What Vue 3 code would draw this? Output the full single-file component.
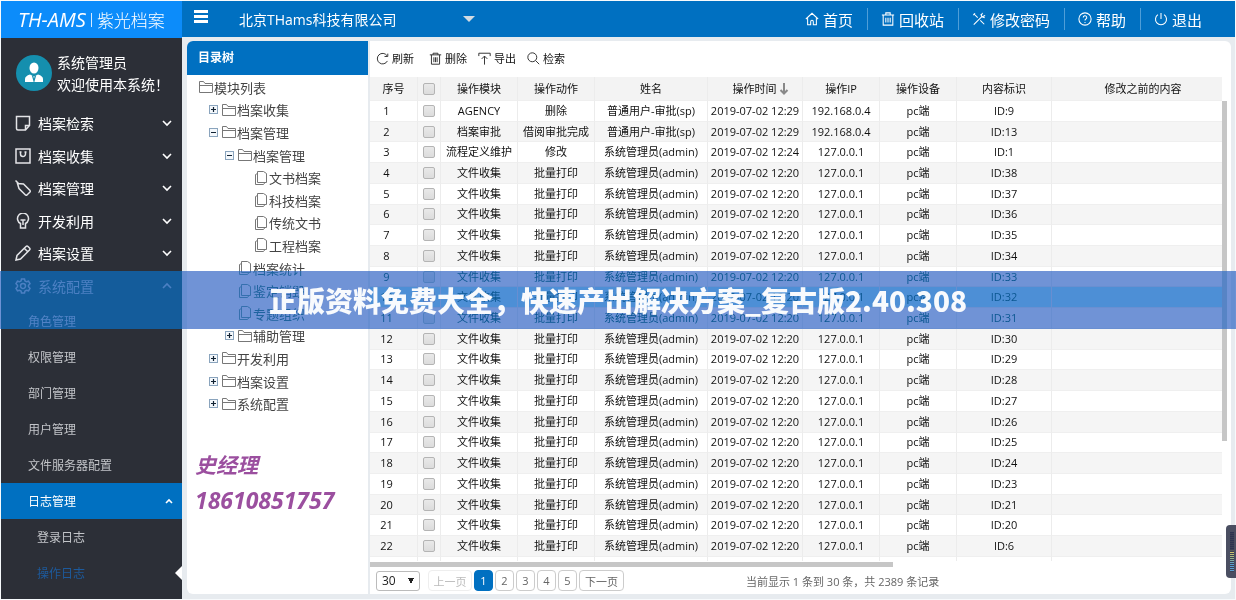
<script setup>
const nav = [
  { icon: 'home', label: '首页' },
  { icon: 'bin', label: '回收站' },
  { icon: 'tools', label: '修改密码' },
  { icon: 'help', label: '帮助' },
  { icon: 'power', label: '退出' }
]
const menu = [
  { icon: 'note', label: '档案检索' },
  { icon: 'bag', label: '档案收集' },
  { icon: 'tag', label: '档案管理' },
  { icon: 'bulb', label: '开发利用' },
  { icon: 'pencil', label: '档案设置' },
  { icon: 'gear', label: '系统配置', open: true }
]
const submenu = [
  { label: '角色管理', kind: 'dim' },
  { label: '权限管理' },
  { label: '部门管理' },
  { label: '用户管理' },
  { label: '文件服务器配置' },
  { label: '日志管理', kind: 'active' },
  { label: '登录日志', kind: 'deep' },
  { label: '操作日志', kind: 'deep current' }
]
const tree = [
  { level: 0, label: '模块列表' },
  { level: 1, label: '档案收集', box: '+' },
  { level: 1, label: '档案管理', box: '-' },
  { level: 2, label: '档案管理', box: '-' },
  { level: 3, label: '文书档案' },
  { level: 3, label: '科技档案' },
  { level: 3, label: '传统文书' },
  { level: 3, label: '工程档案' },
  { level: 2, label: '档案统计' },
  { level: 2, label: '鉴定销毁' },
  { level: 2, label: '专题组织' },
  { level: 2, label: '辅助管理', box: '+' },
  { level: 1, label: '开发利用', box: '+' },
  { level: 1, label: '档案设置', box: '+' },
  { level: 1, label: '系统配置', box: '+' }
]
const tools = [
  { icon: 'refresh', label: '刷新' },
  { icon: 'trash', label: '删除' },
  { icon: 'export', label: '导出' },
  { icon: 'search', label: '检索' }
]
const ids = [9, 13, 1, 38, 37, 36, 35, 34, 33, 32, 31, 30, 29, 28, 27, 26, 25, 24, 23, 21, 20, 6]
const first = [
  ['AGENCY', '删除', '普通用户-审批(sp)', '12:29', '192.168.0.4'],
  ['档案审批', '借阅审批完成', '普通用户-审批(sp)', '12:29', '192.168.0.4'],
  ['流程定义维护', '修改', '系统管理员(admin)', '12:24', '127.0.0.1']
]
const rows = ids.map((id, i) => {
  const r = first[i] || ['文件收集', '批量打印', '系统管理员(admin)', '12:20', '127.0.0.1']
  return { no: i + 1, module: r[0], action: r[1], name: r[2], time: '2019-07-02 ' + r[3], ip: r[4], id: 'ID:' + id }
})
const pages = [1, 2, 3, 4, 5]
const paths = {
  home: 'M1 8 8 1.5 15 8M3 7v7.5h3.5V11a1.5 1.5 0 0 1 3 0v3.5H13V7',
  bin: 'M1 3.5h14M5.5 3V1h5v2M2.5 3.5V15h11V3.5M5.5 6.5v5.500M8 6.5v5.500M10.500 6.500v5.500',
  tools: 'M2 14.500 11.500 5M10 2.500l1.500 3 3 1M12 1l-1.500 3M15 4l-3 1.500M2 2l4.500 4.500M9.500 9.500 14 14M1.500 3.500 3.500 1.500',
  help: 'M8 1a7 7 0 1 0 0 14A7 7 0 1 0 8 1M6 6.300a2 2 0 1 1 3 1.700Q8 8.500 8 9.800M8 11.300v1.200',
  power: 'M4.500 3a6.300 6.300 0 1 0 7 0M8 1v7',
  note: 'M1.500 1.500h13V10.500L10.500 15H3Q1.500 15 1.500 13.500ZM10.500 15V10.500h4',
  bag: 'M1 1h14v14H1ZM5.500 4v2a2.500 2.500 0 0 0 5 0V4M4.500 4h2M9.500 4h2',
  tag: 'M.5.5 4 4M2.500 3.500 8.500 4 15 10.500Q15.500 11.500 15 12L12 15Q11 15.500 10.500 15L4 8.500Z',
  bulb: 'M5.500 12.500V10.500A5.500 5.500 0 1 1 10.500 10.500V12.500M5.500 11.500v3.500h5v-3.500M5.500 7h5M8 7V12',
  pencil: 'M1 15 2 10.500 11 1.500Q12 .5 13 1.500L14.500 3Q15.500 4 14.500 5L5.500 14ZM9.500 3.500l3 3',
  gear: 'M6.500 1h3l.5 2 1.500.8 2-.6 1.500 2.500-1.500 1.500v1.600l1.500 1.500-1.500 2.500-2-.6-1.500.8-.5 2h-3l-.5-2-1.500-.8-2 .6L1 10.300l1.500-1.500V7.200L1 5.700l1.500-2.500 2 .6L6 3ZM8 5.500a2.500 2.500 0 1 0 0 5 2.500 2.500 0 1 0 0-5',
  refresh: 'M13.500 4.500A6.500 6.500 0 1 0 14 11M14.500 2v3.500h-4',
  trash: 'M1 3.500h14M5 3.500V1.500h6v2M3 3.500V15h10V3.500M6 6.500v6M8 6.500v6M10 6.500v6',
  export: 'M1 5V1.500h14V5M8 15.500V5M4.500 8.500 8 5l3.500 3.500',
  search: 'M6.500 1a5.500 5.500 0 1 0 0 11 5.500 5.500 0 1 0 0-11M10.500 10.500 15 15'
}
</script>

<template>
  <div class="page">
    <aside class="side">
      <div class="logo"><em>TH-AMS</em><i></i><span>紫光档案</span></div>
      <div class="profile">
        <svg class="avatar" viewBox="0 0 36 36">
          <circle cx="18" cy="18" r="18" fill="#158fae" />
          <ellipse cx="18" cy="13" rx="4.500" ry="5.500" fill="#fff" />
          <path d="M9 27v-3q0-3 5-4.500l4 2 4-2q5 1.500 5 4.500v3z" fill="#fff" />
          <path d="M16.500 20.500 18 26l1.500-5.500" fill="none" stroke="#158fae" />
        </svg>
        <p>系统管理员<br />欢迎使用本系统！</p>
      </div>
      <nav class="menu">
        <button v-for="m in menu" :key="m.label" type="button" :class="{ open: m.open }">
          <svg class="ico" viewBox="0 0 16 16"><path :d="paths[m.icon]" /></svg>
          <span>{{ m.label }}</span>
          <svg class="chev" viewBox="0 0 10 10"><path :d="m.open ? 'M1 7l4-4 4 4' : 'M1 3l4 4 4-4'" /></svg>
        </button>
      </nav>
      <nav class="sub">
        <a v-for="s in submenu" :key="s.label" href="#" :class="s.kind">
          <span>{{ s.label }}</span>
          <svg v-if="s.kind === 'active'" class="chev" viewBox="0 0 10 10"><path d="M2 7l3-3 3 3" /></svg>
        </a>
      </nav>
    </aside>

    <div class="main">
      <header class="top">
        <button type="button" class="burger" aria-label="菜单"><i></i><i></i><i></i></button>
        <button type="button" class="company">北京THams科技有限公司<i></i></button>
        <nav>
          <a v-for="n in nav" :key="n.label" href="#">
            <svg viewBox="0 0 16 16"><path :d="paths[n.icon]" /></svg>{{ n.label }}
          </a>
        </nav>
      </header>

      <div class="body">
        <section class="treepanel">
          <h2>目录树</h2>
          <ul>
            <li v-for="(t, i) in tree" :key="i" :class="'l' + t.level">
              <span v-if="t.level" class="slot">
                <svg v-if="t.box" viewBox="0 0 9 9">
                  <rect x=".5" y=".5" width="8" height="8" fill="#f4f8fc" stroke="#8aa4bd" />
                  <path :d="t.box === '+' ? 'M2 4.500h5M4.500 2v5' : 'M2 4.500h5'" stroke="#123" fill="none" />
                </svg>
              </span>
              <svg v-if="t.box || !t.level" class="node" viewBox="0 0 14 14">
                <path d="M.5 12.500v-11h4l1.500 2h7.500v9zM.5 5.500h13" />
              </svg>
              <svg v-else class="node" viewBox="0 0 14 14">
                <path d="M3.500.5h6l3 2v9h-9zM3.500 2.500l-2 1v10h8l1.500-2" />
              </svg>
              <span>{{ t.label }}</span>
            </li>
          </ul>
          <p class="contact">史经理<br /><span>18610851757</span></p>
        </section>

        <section class="listpanel">
          <div class="tools">
            <button v-for="t in tools" :key="t.label" type="button" :class="t.icon">
              <svg viewBox="0 0 16 16"><path :d="paths[t.icon]" /></svg>{{ t.label }}
            </button>
          </div>
          <div class="grid">
            <div class="tablebox">
              <table>
                <colgroup>
                  <col class="c48" /><col class="c23" /><col class="c77" /><col class="c77" /><col class="c113" />
                  <col class="c95" /><col class="c77" /><col class="c77" /><col class="c95" /><col />
                </colgroup>
                <thead>
                  <tr>
                    <th>序号</th>
                    <th><input type="checkbox" aria-label="全选" /></th>
                    <th>操作模块</th>
                    <th>操作动作</th>
                    <th>姓名</th>
                    <th class="sorted">操作时间
                      <svg viewBox="0 0 10 12"><path d="M5 0v10M1.500 7 5 10.500 8.500 7" /></svg>
                    </th>
                    <th>操作IP</th>
                    <th>操作设备</th>
                    <th>内容标识</th>
                    <th class="before">修改之前的内容</th>
                  </tr>
                </thead>
                <tbody>
                  <tr v-for="r in rows" :key="r.no" :class="{ hover: r.no === 10 }">
                    <td class="no">{{ r.no }}</td>
                    <td><input type="checkbox" :aria-label="'选择第' + r.no + '行'" /></td>
                    <td>{{ r.module }}</td>
                    <td>{{ r.action }}</td>
                    <td>{{ r.name }}</td>
                    <td>{{ r.time }}</td>
                    <td>{{ r.ip }}</td>
                    <td>pc端</td>
                    <td>{{ r.id }}</td>
                    <td></td>
                  </tr>
                  <tr class="rest"><td v-for="n in 10" :key="n"></td></tr>
                </tbody>
              </table>
            </div>
            <div class="vbar"><i></i></div>
          </div>
          <div class="hbar"><i></i></div>
          <footer class="pager">
            <select aria-label="每页条数"><option>30</option></select>
            <button type="button" class="prev" disabled>上一页</button>
            <button v-for="p in pages" :key="p" type="button" class="num" :class="{ on: p === 1 }">{{ p }}</button>
            <button type="button" class="next">下一页</button>
            <p>当前显示 1 条到 30 条，共 2389 条记录</p>
          </footer>
        </section>
      </div>
    </div>

    <div class="band multiply"></div>
    <div class="band screen"></div>
    <div class="band title">正版资料免费大全，快速产出解决方案_复古版2.40.308</div>
    <div class="gadget"><i></i></div>
  </div>
</template>

<style>
body {
  background: #fff;
}
</style>

<style scoped>
* {
  box-sizing: border-box;
}
.page {
  position: relative;
  display: flex;
  height: 100vh;
  padding: 1px;
  overflow: hidden;
  background: #f7fafc;
  color: #111;
  font-family: "Open Sans", "Noto Sans CJK SC", sans-serif;
}
p, h2, ul {
  margin: 0;
  padding: 0;
}
button {
  padding: 0;
  border: 0;
  background: none;
  color: inherit;
  font: inherit;
}
a {
  color: inherit;
  text-decoration: none;
}
svg path {
  stroke-width: 1.2;
}
.side {
  flex: 0 0 181px;
  background: #2c2f37;
  color: #fff;
}
.logo {
  display: flex;
  align-items: center;
  height: 37px;
  padding-left: 17px;
  background: #0c8cfa;
  font-size: 17px;
  font-weight: 300;
}
.logo em {
  font-size: 20px;
  font-weight: 400;
}
.logo i {
  width: 1px;
  height: 14px;
  margin: 0 5px;
  background: #d5eaff;
}
.profile {
  display: flex;
  align-items: center;
  gap: 5px;
  height: 69px;
  padding-left: 15px;
  font-size: 14px;
  line-height: 22px;
  white-space: nowrap;
}
.profile p {
  padding-top: 3px;
}
.avatar {
  width: 36px;
  height: 36px;
}
.menu {
  display: grid;
  grid-auto-rows: 1fr;
  height: 195px;
  font-size: 14px;
}
.menu button {
  display: flex;
  align-items: center;
  gap: 7px;
  padding: 0 10px 0 14px;
}
.menu button span {
  flex: 1;
  text-align: left;
}
.menu .open {
  color: #adb4c0;
}
.ico {
  width: 16px;
  height: 16px;
  fill: none;
  stroke: #e3e4e7;
}
.ico path {
  stroke-width: 1.5;
}
.open .ico {
  stroke: #adb4c0;
}
.chev {
  width: 10px;
  height: 10px;
  fill: none;
  stroke: currentColor;
}
.chev path {
  stroke-width: 1.6;
}
.sub {
  padding-top: 1px;
}
.sub a {
  position: relative;
  display: flex;
  align-items: center;
  justify-content: space-between;
  height: 36px;
  padding: 0 8px 0 27px;
  color: #c3c5c9;
  font-size: 12px;
}
.sub .dim {
  color: #b9bec9;
}
.sub .active {
  background: #0070c1;
  color: #fff;
}
.sub .deep {
  padding-left: 36px;
}
.sub .current {
  color: #1d5a9c;
}
.sub .current::after {
  content: "";
  position: absolute;
  right: 0;
  border: 7px solid transparent;
  border-left-width: 0;
  border-right-color: #fff;
}
.main {
  display: flex;
  flex: 1;
  flex-direction: column;
  min-width: 0;
  background: #e7ebef;
}
.top {
  display: flex;
  align-items: center;
  height: 36px;
  padding: 0 19px 0 12px;
  background: #0070c1;
  color: #fff;
}
.burger {
  display: grid;
  gap: 2px;
  width: 14px;
  margin: 0 31px 5px 0;
}
.burger i {
  height: 3px;
  background: #fff;
}
.company {
  display: flex;
  align-items: center;
  width: 236px;
  font-size: 14px;
}
.company i {
  margin-left: auto;
  border: 6px solid transparent;
  border-top-color: #d3dbe2;
  border-bottom-width: 0;
}
.top nav {
  display: flex;
  margin-left: auto;
}
.top a {
  display: flex;
  align-items: center;
  gap: 4px;
  padding: 0 14px 0 13px;
  height: 22px;
  font-size: 15px;
  white-space: nowrap;
}
.top a + a {
  border-left: 1px solid #4f9ed8;
}
.top svg {
  width: 14px;
  height: 14px;
  fill: none;
  stroke: #fff;
}
.body {
  display: flex;
  flex: 1;
  gap: 2px;
  min-height: 0;
  margin: 4px 4px 5px 5px;
}
.treepanel {
  flex: 0 0 181px;
  overflow: hidden;
  border-radius: 6px 0 0 6px;
  background: #fff;
}
.treepanel h2 {
  height: 34px;
  padding-left: 11px;
  background: #0070c1;
  color: #fff;
  font-size: 12px;
  font-weight: 700;
  line-height: 34px;
}
.treepanel ul {
  display: grid;
  grid-auto-rows: 1fr;
  height: 339px;
  margin-top: 1px;
  list-style: none;
  color: #444;
  font-size: 13px;
}
.treepanel li {
  display: flex;
  align-items: center;
}
.l0 { padding-left: 12px; }
.l1 { padding-left: 22px; }
.l2 { padding-left: 38px; }
.l3 { padding-left: 54px; }
.slot {
  display: flex;
  align-items: center;
  width: 13px;
  height: 18px;
}
.slot svg {
  width: 9px;
  height: 9px;
}
.node {
  width: 14px;
  height: 14px;
  margin-right: 1px;
  fill: none;
  stroke: #777;
}
.node path {
  stroke-width: 1;
}
.contact {
  padding: 33px 0 0 8px;
  color: #9b4f9f;
  font-size: 21px;
  font-style: italic;
  font-weight: 700;
  line-height: 35px;
}
.contact span {
  font-size: 23px;
}
.listpanel {
  display: flex;
  flex: 1;
  flex-direction: column;
  min-width: 0;
  padding-right: 4px;
  border-radius: 0 6px 6px 0;
  background: #fff;
}
.tools {
  display: flex;
  align-items: center;
  gap: 11px;
  height: 36px;
  padding: 0 0 2px 6px;
  font-size: 11px;
}
.tools button {
  display: flex;
  align-items: center;
  gap: 3px;
}
.tools .refresh {
  margin-right: 4px;
}
.tools svg {
  width: 13px;
  height: 13px;
  fill: none;
  stroke: #333;
}
.grid {
  display: flex;
  flex: 1;
  min-height: 0;
}
.tablebox {
  flex: 1;
  min-width: 0;
}
table {
  width: 100%;
  height: 100%;
  border-collapse: separate;
  border-spacing: 0;
  table-layout: fixed;
  font-size: 11px;
  line-height: 16px;
  text-align: center;
}
.c48 { width: 48px; }
.c23 { width: 23px; }
.c77 { width: 77px; }
.c113 { width: 113px; }
.c95 { width: 95px; }
th, td {
  padding: 0;
  border-right: 1px solid #ececec;
  border-bottom: 1px solid #efefef;
  white-space: nowrap;
}
th:last-child, td:last-child {
  border-right: 0;
}
th {
  height: 24px;
  background: #f3f3f3;
  font-weight: 400;
}
tbody tr:nth-child(even) {
  background: #f5f5f5;
}
tbody tr.hover {
  background: #b0eeff;
}
.no {
  padding-right: 14px;
}
th.before {
  padding-left: 12px;
}
tbody tr.rest {
  height: 4px;
  background: #fff;
}
.rest td {
  height: 4px;
  border-bottom: 0;
}
.sorted svg {
  width: 10px;
  height: 12px;
  vertical-align: -2px;
  fill: none;
  stroke: #888;
}
th.sorted {
  padding-left: 12px;
}
.sorted path {
  stroke-width: 2;
}
input {
  display: block;
  width: 12px;
  height: 12px;
  margin: 0 auto;
  appearance: none;
  border: 1px solid #b4b4b4;
  border-radius: 2px;
  background: linear-gradient(#e9e9e9, #dcdcdc);
}
.vbar {
  width: 5px;
  padding-top: 24px;
}
.vbar i {
  display: block;
  height: 74%;
  background: #c6c6c6;
}
.hbar {
  height: 6px;
  padding-top: 1px;
}
.hbar i {
  display: block;
  width: 61%;
  height: 5px;
  background: #c6c6c6;
}
.pager {
  display: flex;
  align-items: center;
  gap: 2px;
  height: 27px;
  padding-left: 6px;
  color: #666;
  font-size: 11px;
}
.pager select {
  width: 44px;
  height: 20px;
  margin-right: 6px;
  padding: 0 5px;
  appearance: none;
  border: 1px solid #bbb;
  border-radius: 3px;
  background:
    linear-gradient(to bottom right, #222 50%, transparent 50%) 34px 6px / 3px 6px no-repeat,
    linear-gradient(to bottom left, #222 50%, transparent 50%) 31px 6px / 3px 6px no-repeat,
    #fff;
  color: #222;
  font: inherit;
  font-size: 12px;
}
.pager button {
  height: 21px;
  border: 1px solid #ccc;
  border-radius: 4px;
  background: #fff;
}
.pager .prev {
  width: 44px;
  border-color: #eee;
  color: #bbb;
}
.pager .num {
  width: 19px;
}
.pager .on {
  border-color: #0070c1;
  background: #0070c1;
  color: #fff;
}
.pager .next {
  width: 45px;
}
.pager p {
  margin: 0 0 0 120px;
  white-space: nowrap;
}
.band {
  position: absolute;
  top: 271px;
  left: 0;
  right: 0;
  height: 58px;
}
.multiply {
  background: rgb(112, 98, 166);
  mix-blend-mode: multiply;
}
.screen {
  background: rgb(0, 80, 138);
  mix-blend-mode: screen;
}
.title {
  color: #f8fafd;
  font-family: "Noto Sans CJK SC", sans-serif;
  font-size: 28px;
  font-weight: 900;
  line-height: 58px;
  text-align: center;
  white-space: nowrap;
}
.gadget {
  position: absolute;
  top: 525px;
  right: 0;
  width: 10px;
  height: 53px;
  padding: 7px 2px 6px 4px;
  border-radius: 4px 0 0 4px;
  background: #4a4e61;
}
.gadget i {
  display: block;
  height: 100%;
  background:
    repeating-linear-gradient(transparent 0 1px, #3c4054 1px 2px),
    linear-gradient(#2d3350 45%, #d5c66c 50%, #9db786 65%, #5a9fd0 80%);
}
</style>
